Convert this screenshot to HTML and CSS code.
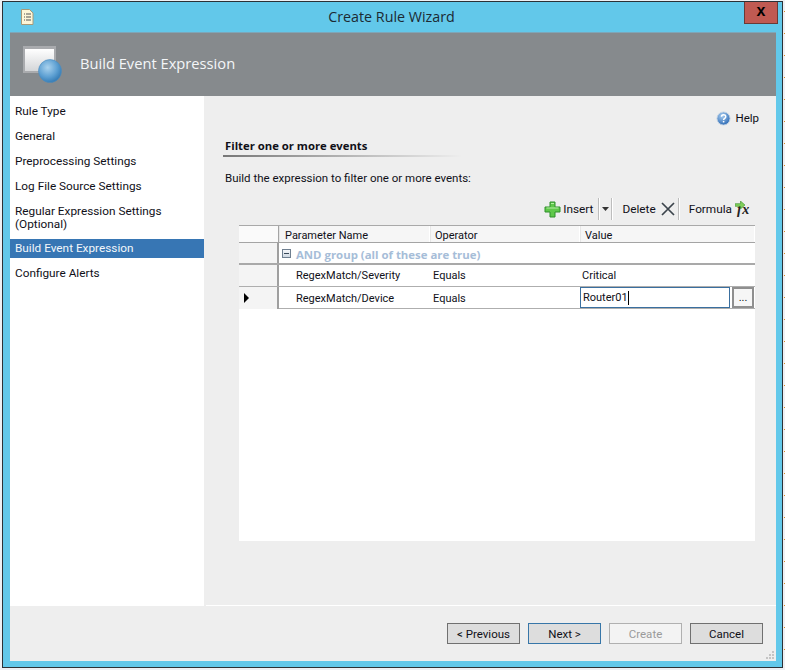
FILE: index.html
```html
<!DOCTYPE html>
<html lang="en">
<head>
<meta charset="utf-8">
<title>Create Rule Wizard</title>
<link rel="stylesheet" href="styles.css">
</head>
<body>
<div class="window">
  <div class="titlebar">
    <svg class="doc-icon" width="14" height="16" viewBox="0 0 14 16">
      <path d="M1.5.5h8l3.5 3.5v11.500h-11.500z" fill="#fdf6d8" stroke="#a89a78"/>
      <path d="M4 5h1M6 5h5M4 8h1M6 8h5M4 11h1M6 11h5" stroke="#555" stroke-width="1"/>
    </svg>
    <span class="title">Create Rule Wizard</span>
    <div class="close">x</div>
  </div>
  <div class="client">
    <div class="banner">
      <svg class="banner-icon" width="40" height="38" viewBox="0 0 40 38">
        <defs>
          <linearGradient id="pane" x1="0" y1="0" x2="0" y2="1">
            <stop offset="0" stop-color="#ffffff"/>
            <stop offset="1" stop-color="#d4d6d8"/>
          </linearGradient>
          <radialGradient id="ball" cx=".4" cy=".35" r=".7">
            <stop offset="0" stop-color="#a9d2ee"/>
            <stop offset=".6" stop-color="#5c9fd2"/>
            <stop offset="1" stop-color="#2f76b0"/>
          </radialGradient>
        </defs>
        <rect x="0" y="0" width="33" height="27" fill="#a9abae"/>
        <rect x="2" y="3" width="29" height="22" fill="url(#pane)"/>
        <circle cx="27" cy="25" r="11.500" fill="url(#ball)" stroke="#4f8dbd" stroke-width=".6"/>
      </svg>
      <span class="banner-title">Build Event Expression</span>
    </div>
    <div class="main">
      <nav class="nav">
        <div class="nav-item">Rule Type</div>
        <div class="nav-item">General</div>
        <div class="nav-item">Preprocessing Settings</div>
        <div class="nav-item">Log File Source Settings</div>
        <div class="nav-item nav-item-tall">Regular Expression Settings (Optional)</div>
        <div class="nav-item nav-item-active">Build Event Expression</div>
        <div class="nav-item nav-item-last">Configure Alerts</div>
      </nav>
      <section class="content">
        <div class="help-row">
          <svg width="15" height="15" viewBox="0 0 16 16">
            <defs>
              <radialGradient id="helpball" cx=".4" cy=".3" r=".8">
                <stop offset="0" stop-color="#a8cdf0"/>
                <stop offset="1" stop-color="#1f5fae"/>
              </radialGradient>
            </defs>
            <circle cx="8" cy="8" r="7" fill="url(#helpball)" stroke="#c9d6e4"/>
            <path d="M5.800 6.200c0-3 4.600-3 4.600-.2 0 1.800-2.300 1.900-2.300 3.600" fill="none" stroke="#fff" stroke-width="1.500"/>
            <rect x="7.300" y="10.600" width="1.600" height="1.600" fill="#fff"/>
          </svg>
          <span>Help</span>
        </div>
        <h2 class="heading">Filter one or more events</h2>
        <p class="desc">Build the expression to filter one or more events:</p>
        <div class="toolbar">
          <svg class="tb-plus" width="17" height="17" viewBox="0 0 17 17">
            <path d="M6 1h5v5h5v5h-5v5H6v-5H1V6h5z" fill="#5fc84a" stroke="#2f8f2a"/>
            <path d="M7 2.500h3M2.500 7h12" stroke="#b6eea4"/>
          </svg>
          <span class="tb-insert">Insert</span>
          <span class="tb-sep"></span>
          <svg class="tb-arrow" width="7" height="4" viewBox="0 0 7 4"><path d="M0 0h7L3.500 4z" fill="#333"/></svg>
          <span class="tb-sep tb-sep-b"></span>
          <span class="tb-delete">Delete</span>
          <svg class="tb-x" width="14" height="14" viewBox="0 0 14 14"><path d="M1 1l12 12M13 1L1 13" stroke="#3c444c" stroke-width="1.700"/></svg>
          <span class="tb-sep tb-sep-c"></span>
          <span class="tb-formula">Formula</span>
          <span class="tb-fx">
            <i class="fx-text">fx</i>
            <svg class="fx-arrow" width="11" height="8" viewBox="0 0 12 9"><path d="M0 3h6V0l5 4.500L6 9V6H0z" fill="#7fd05a" stroke="#3f8f2f" stroke-width=".7"/></svg>
          </span>
        </div>
        <div class="grid">
          <div class="row row-head">
            <div class="cell cell-rh"></div>
            <div class="cell head-cell head-first">Parameter Name</div>
            <div class="cell head-cell">Operator</div>
            <div class="cell head-cell">Value</div>
          </div>
          <div class="row row-group">
            <div class="cell cell-rh"></div>
            <div class="group-cell">
              <span class="expander"></span>
              <span class="group-text">AND group (all of these are true)</span>
            </div>
          </div>
          <div class="row row-data">
            <div class="cell cell-rh"></div>
            <div class="cell data-name">RegexMatch/Severity</div>
            <div class="cell data-op">Equals</div>
            <div class="cell data-val">Critical</div>
          </div>
          <div class="row row-data">
            <div class="cell cell-rh"><span class="row-arrow"></span></div>
            <div class="cell data-name">RegexMatch/Device</div>
            <div class="cell data-op">Equals</div>
            <div class="cell data-edit">
              <div class="edit-box">Router01<span class="caret"></span></div>
              <div class="dots">...</div>
            </div>
          </div>
        </div>
      </section>
    </div>
    <div class="footer">
      <button class="btn">&lt; Previous</button>
      <button class="btn btn-default">Next &gt;</button>
      <button class="btn btn-disabled">Create</button>
      <button class="btn">Cancel</button>
      <svg class="grip" width="10" height="10" viewBox="0 0 10 10"><path d="M7 1h2v2H7zM4 4h2v2H4zM7 4h2v2H7zM1 7h2v2H1zM4 7h2v2H4zM7 7h2v2H7z" fill="#c4c4c4"/></svg>
    </div>
  </div>
</div>
</body>
</html>
```
FILE: styles.css
```css
* { box-sizing: border-box; }
html, body { height: 100%; }
body {
  margin: 0;
  overflow: hidden;
  background-color: #eef0f4;
  background-image: repeating-linear-gradient(to bottom, transparent 0 11px, #d98a20 11px 12px, transparent 12px 22px);
  background-size: 1px 100%;
  background-position: right top;
  background-repeat: no-repeat;
  font-family: Roboto, "Open Sans", sans-serif;
  font-size: 11.500px;
  color: #101018;
}
.window {
  width: 781px;
  height: 667px;
  margin: 1px 0 0 2px;
  border: 1px solid #2c3136;
  background: #62c8ea;
  padding: 0 6px 6px 7px;
  display: flex;
  flex-direction: column;
}
.titlebar {
  height: 30px;
  flex: none;
  position: relative;
  display: flex;
  align-items: center;
  justify-content: center;
}
.doc-icon { position: absolute; left: 10px; top: 7px; }
.title { font-family: "Open Sans", sans-serif; font-size: 14.300px; color: #1c2a33; padding: 0 3px 2px 0; }
.close {
  position: absolute;
  right: -2px;
  top: 0;
  width: 34px;
  height: 22px;
  background: #c05a52;
  border: 1px solid #6a3a36;
  border-top: 0;
  color: #000;
  font-family: "Liberation Sans", sans-serif;
  font-weight: 700;
  font-size: 16px;
  line-height: 17px;
  text-align: center;
}
.client {
  flex: 1;
  display: flex;
  flex-direction: column;
  background: #eeeeee;
  min-height: 0;
}
.banner {
  height: 64px;
  flex: none;
  background: #868a8d;
  border-top: 1px solid #7ea6b8;
  display: flex;
  align-items: center;
  padding: 0 0 4px 13px;
}
.banner-icon { margin-top: 5px; }
.banner-title { margin-left: 17px; font-family: "Open Sans", sans-serif; font-size: 14.700px; color: #f4f6f8; }
.main { flex: 1; display: flex; min-height: 0; }
.nav {
  width: 194px;
  flex: none;
  background: #fff;
  padding-top: 5px;
  display: flex;
  flex-direction: column;
  gap: 6px;
  font-size: 11.800px;
}
.nav-item {
  height: 19px;
  padding: 2px 0 0 5px;
  display: flex;
  align-items: center;
  line-height: 13px;
}
.nav-item-tall { height: 32px; }
.nav-item-active { background: #3776b4; color: #f2f6fa; padding: 0 0 1px 5px; }
.nav-item-last { padding: 0 0 1px 5px; }
.content {
  flex: 1;
  min-width: 0;
  position: relative;
  padding: 0 21px 0 19px;
  border-bottom: 1px solid #fff;
  margin-left: 2px;
  display: flex;
  flex-direction: column;
}
.help-row {
  display: flex;
  align-items: center;
  justify-content: flex-end;
  gap: 4px;
  height: 16px;
  margin-top: 14px;
  margin-right: -4px;
}
.heading {
  margin: 11px 0 0 -2px;
  padding: 0 0 2px 2px;
  height: 20px;
  font-family: "Open Sans", sans-serif;
  font-size: 11.300px;
  line-height: 17px;
  font-weight: 700;
  width: 238px;
  border-bottom: 2px solid transparent;
  border-image: linear-gradient(to right, #777, #eee) 1;
}
.desc { margin: 13px 0 0; line-height: 16px; height: 16px; }
.toolbar {
  height: 24px;
  margin-top: 11px;
  display: flex;
  align-items: center;
  justify-content: flex-end;
  font-size: 11.800px;
}
.tb-plus { margin-right: 2px; }
.tb-insert { margin-right: 5px; }
.tb-sep { width: 2px; height: 22px; background: #bdbdbd; border-right: 1px solid #fff; }
.tb-arrow { margin: 0 2px; }
.tb-sep-b { margin-right: 9px; }
.tb-delete { margin-right: 5px; }
.tb-x { margin-right: 3px; }
.tb-sep-c { margin-right: 9px; }
.tb-formula { margin-right: 3px; }
.tb-fx { width: 17px; height: 16px; position: relative; margin-right: 3px; }
.fx-arrow { position: absolute; left: 0; top: 0; }
.fx-text {
  position: absolute;
  left: 2px;
  top: 2px;
  font-family: "Liberation Serif", serif;
  font-weight: 700;
  font-size: 14px;
  line-height: 14px;
  letter-spacing: .5px;
  color: #222;
}
.grid {
  margin-top: 4px;
  margin-left: 14px;
  width: 516px;
  height: 316px;
  background: #fff;
  border-top: 1px solid #a9a9a9;
  flex: none;
}
.row { display: grid; grid-template-columns: 40px 151px 150px 175px; }
.cell { display: flex; align-items: center; padding-left: 4px; min-width: 0; }
.cell-rh { background: #f4f4f4; padding-left: 5px; border-bottom: 1px solid #aeaeae; border-right: 2px solid #9f9f9f; }
.row-head { height: 17px; background: #fafafa; border-bottom: 1px solid #a4a4a4; font-size: 11px; }
.row-head .cell-rh { border-bottom: 0; border-right: 1px solid #a4a4a4; background: #fafafa; }
.head-cell { background: #f6f6f6; border-right: 1px solid #fff; border-left: 1px solid #e6e6e6; padding-top: 2px; }
.head-first { padding-left: 5px; }
.row-group { height: 22px; border-bottom: 2px solid #a9a9a9; grid-template-columns: 40px 1fr; }
.row-group .cell-rh { border-bottom: 0; }
.group-cell { display: flex; align-items: center; padding: 2px 0 0 3px; min-width: 0; }
.expander { width: 9px; height: 9px; border: 1px solid #6f7f90; background: linear-gradient(#f6f8fa, #cfd8e2); position: relative; margin: 0 5px 2px 0; }
.expander::after { content: ""; position: absolute; left: 1px; right: 1px; top: 3px; height: 1px; background: #3a4a5a; }
.group-text { font-family: "Open Sans", sans-serif; font-weight: 700; color: #a6bdd8; font-size: 11.400px; }
.row-data { height: 22px; border-bottom: 1px solid #aeaeae; font-size: 11px; }
.row-data .cell-rh { border-bottom: 0; }
.data-name { padding-left: 17px; }
.data-op { padding-left: 3px; }
.data-val { padding-left: 2px; }
.data-edit { padding: 0; gap: 2px; align-items: stretch; }
.edit-box { width: 150px; border: 1px solid #3a6f9f; padding-left: 2px; display: flex; align-items: center; margin-bottom: 1px; }
.caret { width: 1px; height: 14px; background: #000; }
.dots { width: 22px; border: 2px solid #8f8f8f; background: #f6f6f6; text-align: center; line-height: 17px; margin-bottom: 1px; }
.row-arrow { width: 0; height: 0; border-left: 5px solid #000; border-top: 5px solid transparent; border-bottom: 5px solid transparent; }
.footer {
  height: 55px;
  flex: none;
  position: relative;
  display: flex;
  align-items: flex-start;
  justify-content: flex-end;
  gap: 8px;
  padding: 17px 13px 0 0;
}
.btn {
  width: 73px;
  height: 21px;
  padding: 0;
  background: #dddddd;
  border: 1px solid #707070;
  font: inherit;
  color: #101018;
}
.btn-default { border-color: #3776a8; }
.btn-disabled { background: #f3f3f3; border-color: #b0b0b0; color: #9a9a9a; }
.grip { position: absolute; right: 1px; bottom: 1px; }
```
